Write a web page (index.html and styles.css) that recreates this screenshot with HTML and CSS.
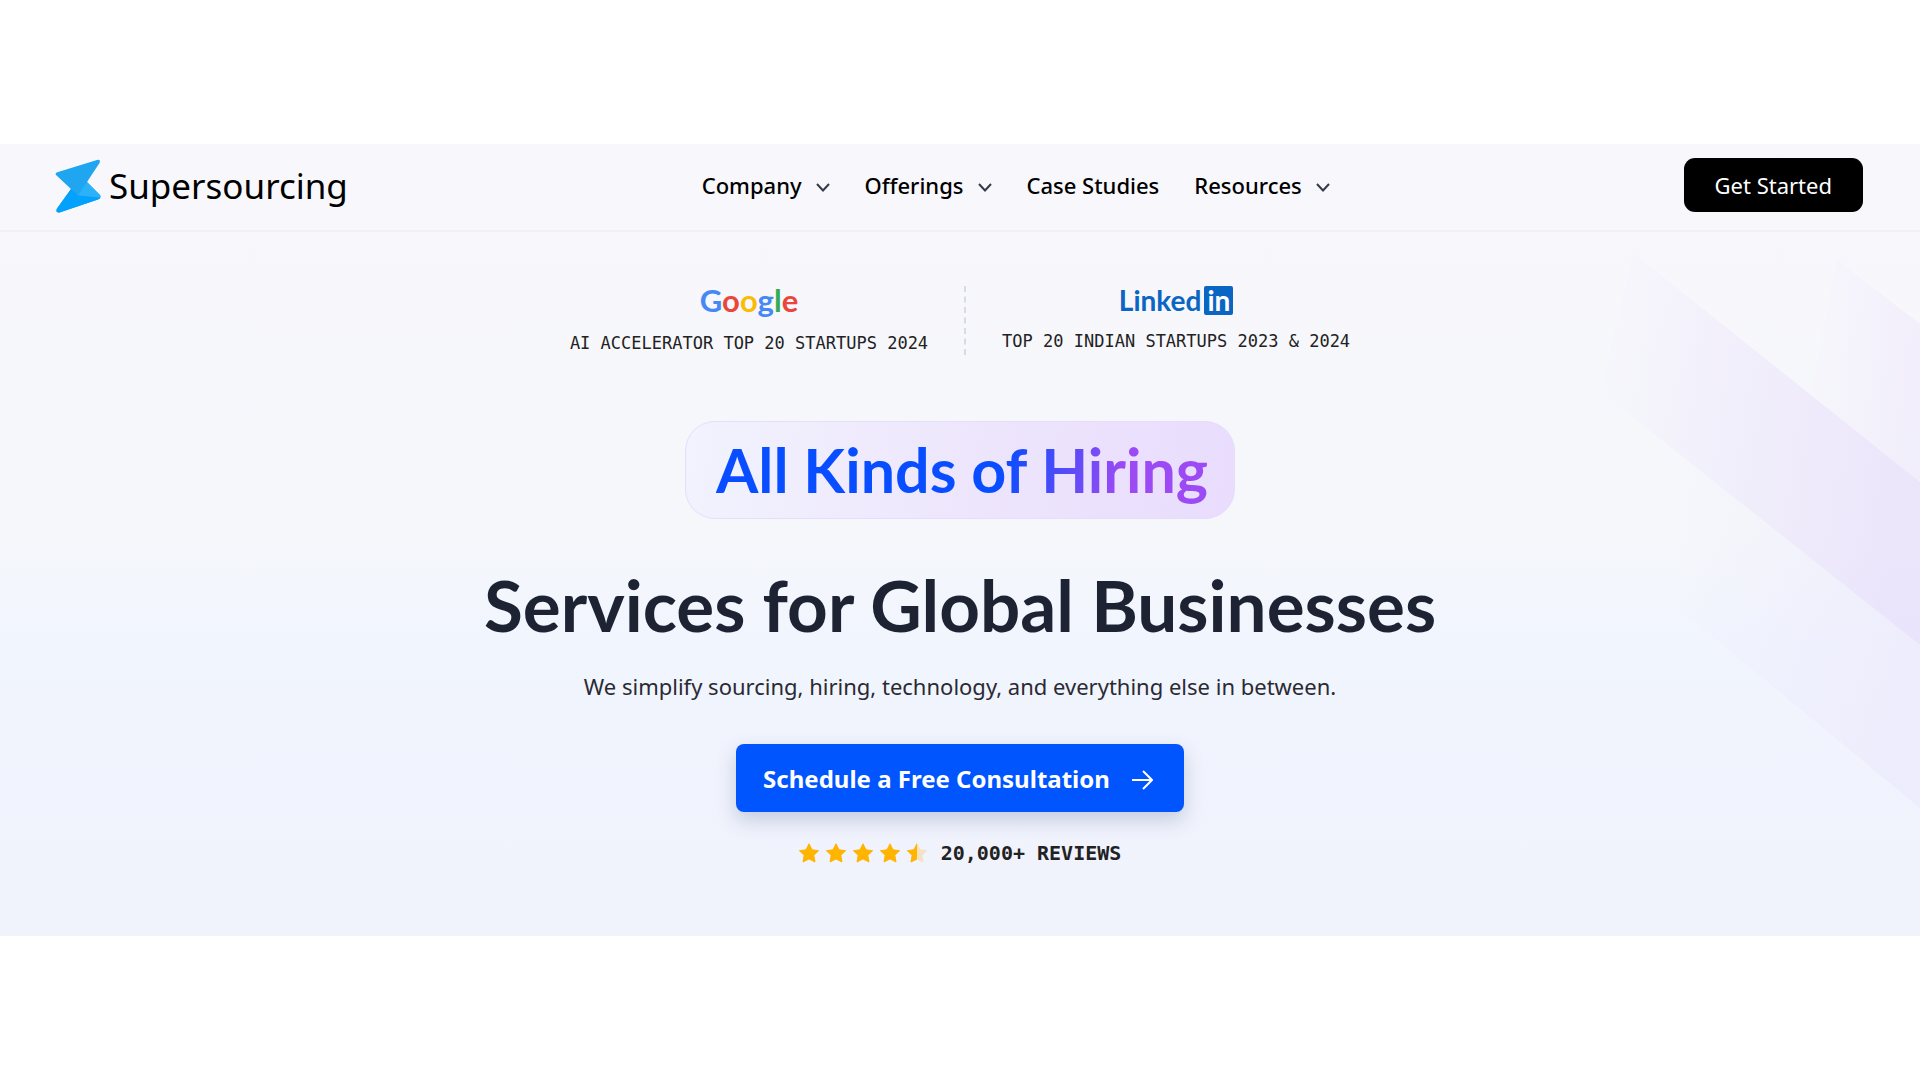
FILE: index.html
```
<!DOCTYPE html>
<html lang="en">
<head>
    <meta charset="UTF-8">
    <meta name="viewport" content="width=device-width, initial-scale=1.0">
    <title>Supersourcing</title>
    <link rel="stylesheet" href="styles.css">
</head>
<body>
    <div class="page">
        <svg class="stripes" viewBox="0 0 420 706" aria-hidden="true">
            <defs>
                <linearGradient id="stripe-main" x1="0" y1="0" x2="1" y2="0.15">
                    <stop offset="0" stop-color="#e0d0fa" stop-opacity="0"/>
                    <stop offset="1" stop-color="#e0d0fa" stop-opacity="0.45"/>
                </linearGradient>
                <linearGradient id="stripe-soft" x1="0" y1="0" x2="1" y2="0.15">
                    <stop offset="0" stop-color="#e6d9fa" stop-opacity="0"/>
                    <stop offset="1" stop-color="#e6d9fa" stop-opacity="0.28"/>
                </linearGradient>
            </defs>
            <path d="M133 1 L420 230 V393 L100 139 Z" fill="url(#stripe-main)"/>
            <path d="M337 8 L420 72 V230 L310 142 Z" fill="url(#stripe-soft)"/>
            <path d="M180 202 L420 393 V556 L180 358 Z" fill="url(#stripe-soft)"/>
        </svg>

        <header class="navbar">
            <a href="#" class="brand">
                <svg class="brand-mark" viewBox="0 0 46 55" aria-hidden="true">
                    <path d="M3 14 L42 2 Q46 1 44.500 5 L32 24 L45 37 Q46.500 40 43 41.500 L4.500 54.500 Q0 55 2 50.500 L16 31 L1 17 Q-.5 15 3 14 Z" fill="#20a5f1"/>
                    <path d="M16 31 L23 37.500 L45.500 39.500 Q45 41 43 41.500 L4.500 54.500 Q0 55 2 50.500 Z" fill="#02a1fd"/>
                    <path d="M32 24 L45 37 Q46 38.500 45.500 39.500 L23 37.500 Z" fill="#2bb1f8"/>
                </svg>
                <span>Supersourcing</span>
            </a>
            <nav class="menu">
                <button type="button">Company <svg viewBox="0 0 14 9"><path d="M1 1 L7 7.500 L13 1"/></svg></button>
                <button type="button">Offerings <svg viewBox="0 0 14 9"><path d="M1 1 L7 7.500 L13 1"/></svg></button>
                <a href="#">Case Studies</a>
                <button type="button">Resources <svg viewBox="0 0 14 9"><path d="M1 1 L7 7.500 L13 1"/></svg></button>
            </nav>
            <button type="button" class="get-started">Get Started</button>
        </header>

        <main class="hero">
            <div class="awards">
                <div class="award">
                    <div class="google"><span class="blue">G</span><span class="red">o</span><span class="yellow">o</span><span class="blue">g</span><span class="green">l</span><span class="red">e</span></div>
                    <p>AI ACCELERATOR TOP 20 STARTUPS 2024</p>
                </div>
                <div class="award">
                    <div class="linkedin">Linked<span>in</span></div>
                    <p>TOP 20 INDIAN STARTUPS 2023 &amp; 2024</p>
                </div>
            </div>

            <h1>
                <span class="pill"><span>All Kinds of Hiring</span></span>
                <span class="headline">Services for Global Businesses</span>
            </h1>
            <p class="tagline">We simplify sourcing, hiring, technology, and everything else in between.</p>

            <button type="button" class="cta">
                Schedule a Free Consultation
                <svg viewBox="0 0 22 20"><path d="M1 10 H20 M12 1 L21 10 L12 19"/></svg>
            </button>

            <div class="reviews">
                <svg class="stars" viewBox="0 0 129 20" role="img" aria-label="4.5 out of 5 stars">
                    <defs>
                        <path id="star" d="M10 .8 L13 6.800 L19.600 7.700 L14.800 12.300 L16 19 L10 15.900 L4 19 L5.200 12.300 L.4 7.700 L7 6.800 Z" stroke-width="1" stroke-linejoin="round"/>
                        <clipPath id="half"><rect width="10" height="20"/></clipPath>
                    </defs>
                    <g fill="#ffb400" stroke="#ffb400">
                        <use href="#star"/>
                        <use href="#star" x="27"/>
                        <use href="#star" x="54"/>
                        <use href="#star" x="81"/>
                    </g>
                    <g transform="translate(108 0)">
                        <use href="#star" fill="#f3e3c3" stroke="#f3e3c3"/>
                        <use href="#star" fill="#ffb400" stroke="#ffb400" clip-path="url(#half)"/>
                    </g>
                </svg>
                <span>20,000+ REVIEWS</span>
            </div>
        </main>
    </div>
</body>
</html>
```
FILE: styles.css
```
* {
    box-sizing: border-box;
}

body {
    margin: 0;
    min-height: 100vh;
    display: flex;
    align-items: center;
    background: #fff;
    color: #000;
    font-family: "Noto Sans", sans-serif;
}

button {
    font-family: inherit;
    border: none;
    cursor: pointer;
}

h1, p {
    margin: 0;
}

.page {
    position: relative;
    width: 100%;
    overflow: hidden;
    background: linear-gradient(#f8f7fc, #f5f7fb 50%, #f1f5fe 63%, #f0f2fc);
}

.stripes {
    position: absolute;
    top: 108px;
    right: 0;
    width: 420px;
}

/* header */
.navbar {
    position: relative;
    display: flex;
    justify-content: space-between;
    align-items: center;
    padding: 14px 57px 18px 55px;
    border-bottom: 2px solid #f1f1f5;
}

.brand {
    display: flex;
    align-items: center;
    gap: 8px;
    height: 54px;
    color: #000;
    font-size: 35px;
    text-decoration: none;
}

.brand-mark {
    width: 46px;
    height: 55px;
}

.menu {
    display: flex;
    align-items: center;
    gap: 35px;
}

.menu a,
.menu button {
    display: flex;
    align-items: center;
    gap: 14px;
    padding: 0;
    background: none;
    color: #000;
    font-size: 22px;
    font-weight: 500;
    text-decoration: none;
}

.menu svg {
    width: 14px;
    height: 9px;
    margin-top: 5px;
    fill: none;
    stroke: #333a4a;
    stroke-width: 2;
}

.get-started {
    padding: 0 31px;
    height: 54px;
    border-radius: 11px;
    background: #000;
    color: #fff;
    font-size: 22px;
}

/* hero */
.hero {
    position: relative;
    display: flex;
    flex-direction: column;
    align-items: center;
    padding: 54px 24px 67px;
}

.awards {
    display: flex;
}

.award {
    display: flex;
    flex-direction: column;
    align-items: center;
    padding: 0 36px;
}

.award + .award {
    border-left: 2px dashed #d5dce5;
}

.award p {
    font-family: "DejaVu Sans Mono", monospace;
    font-size: 17px;
    line-height: 24px;
    color: #222;
}

.google,
.linkedin {
    font-family: Lato, sans-serif;
}

.google {
    height: 45px;
    font-size: 31px;
    font-weight: 700;
    line-height: 28px;
}

.blue {
    color: #4688f4;
}

.red {
    color: #ea4639;
}

.yellow {
    color: #fbbc05;
}

.green {
    color: #36a955;
}

.linkedin {
    display: flex;
    align-items: flex-start;
    gap: 3px;
    height: 43px;
    color: #0a66c2;
    font-size: 28px;
    font-weight: 700;
    line-height: 29px;
}

.linkedin span {
    width: 29px;
    height: 29px;
    border-radius: 2px;
    background: #0a66c2;
    color: #fff;
    text-align: center;
}

h1 {
    display: flex;
    flex-direction: column;
    align-items: center;
    gap: 42px;
    margin-top: 66px;
    font-family: Lato, sans-serif;
    font-weight: 700;
}

.pill {
    padding: 0 26px 0 30px;
    border: 1px solid #e8dcfd;
    border-radius: 30px;
    background: linear-gradient(100deg, #f2f3fe, #ede5fc 55%, #e9dcfd);
    font-size: 61px;
    line-height: 96px;
}

.pill span {
    background: linear-gradient(100deg, #084dff 58%, #9c4af4 82%);
    -webkit-background-clip: text;
    background-clip: text;
    color: transparent;
}

.headline {
    color: #1d2333;
    font-size: 71px;
    line-height: 88px;
}

.tagline {
    margin-top: 19px;
    color: #2a2a33;
    font-size: 22px;
    line-height: 36px;
}

.cta {
    display: flex;
    align-items: center;
    gap: 21px;
    height: 68px;
    margin-top: 40px;
    padding: 0 31px 0 27px;
    border-radius: 8px;
    background: #0055ff;
    box-shadow: 0 8px 20px rgba(40, 60, 120, 0.22);
    color: #fff;
    font-size: 24px;
    font-weight: 700;
}

.cta svg {
    width: 22px;
    height: 20px;
    margin-top: 4px;
    fill: none;
    stroke: #fff;
    stroke-width: 2;
}

.reviews {
    display: flex;
    align-items: center;
    gap: 13px;
    margin-top: 25px;
    color: #222;
    font-family: "DejaVu Sans Mono", monospace;
    font-size: 20px;
    font-weight: 700;
    line-height: 32px;
}

.stars {
    width: 129px;
    height: 20px;
}
```
